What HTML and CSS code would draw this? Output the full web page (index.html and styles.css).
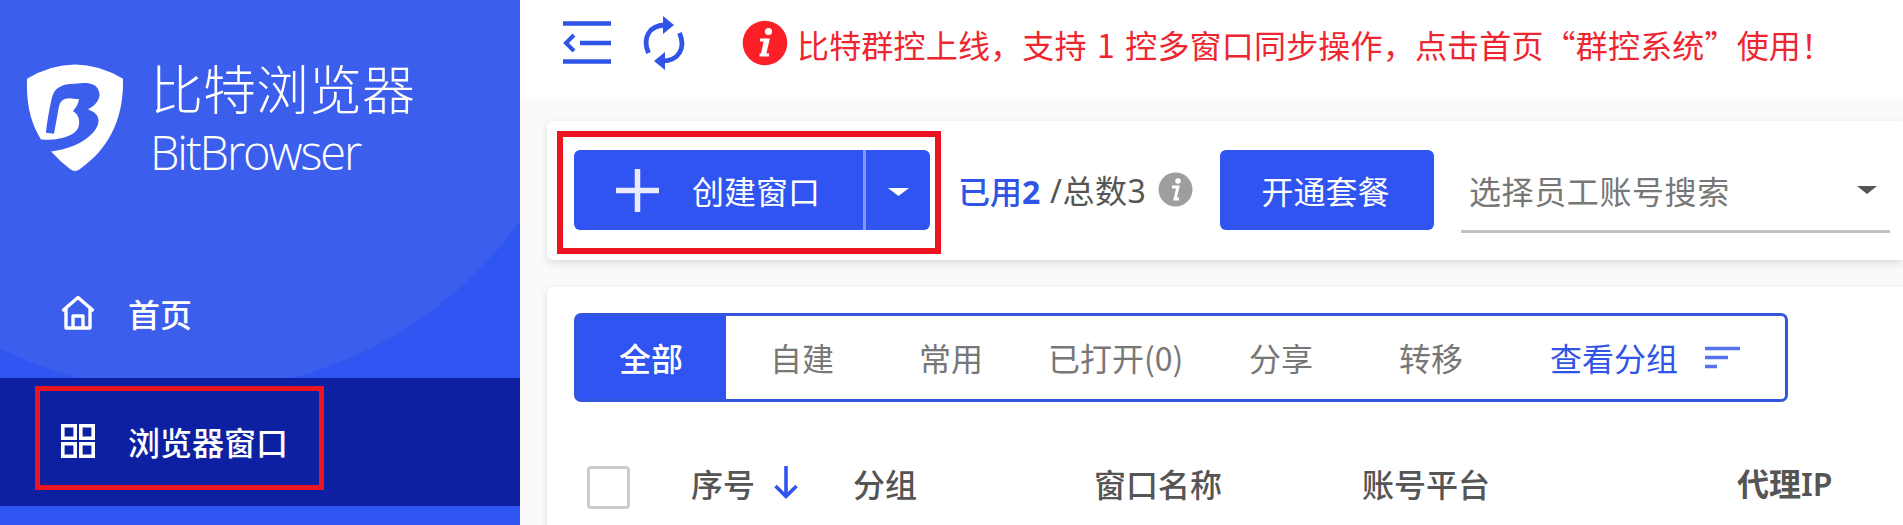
FILE: index.html
```html
<!DOCTYPE html>
<html lang="zh-CN">
<head>
<meta charset="utf-8">
<title>比特浏览器</title>
<link rel="stylesheet" href="styles.css">
</head>
<body>
<div class="app">
  <aside class="sidebar">
    <div class="brand">
      <svg class="brand-logo" width="98" height="108" viewBox="0 0 98 110" preserveAspectRatio="none">
        <path fill="#fff" d="M1 15Q49-14 97 15C98 57 82 87 54 107Q49 111 44 107Q34 99 25 89C41 87 57 81 67 70C75 61 74 52 66 48L62 46C71 42 75 34 73 28C71 20 63 18 49 20C38 20 30 23 27 31C25 36 21 59 20 70L28 71L33 43Q35 35 43 35L53 36C52 43 49 45 47 48C51 50 54 55 53 61C53 71 38 78 15 77C6 62 0 44 1 15Z"/>
      </svg>
      <div class="brand-text">
        <div class="brand-cn">比特浏览器</div>
        <div class="brand-en">BitBrowser</div>
      </div>
    </div>
    <nav class="menu">
      <a class="menu-item">
        <svg class="menu-icon" width="34" height="36" viewBox="0 0 34 36" fill="none" stroke="#fff" stroke-width="3.4" stroke-linejoin="round" stroke-linecap="round"><path d="M2.500 15 17 2.500 31.500 15M5 14V33H29V14M12 33V21H22V33"/></svg>
        <span>首页</span>
      </a>
      <a class="menu-item active">
        <svg class="menu-icon" width="34" height="36" viewBox="0 0 34 36" fill="none" stroke="#fff" stroke-width="3.6"><path d="M1.800 2.800H14.200V15.200H1.800ZM19.800 2.800H32.200V15.200H19.800ZM1.800 20.800H14.200V33.200H1.800ZM19.800 20.800H32.200V33.200H19.800Z"/></svg>
        <span>浏览器窗口</span>
        <i class="mark mark-menu"></i>
      </a>
    </nav>
  </aside>

  <main class="main">
    <header class="topbar">
      <svg class="fold" width="48" height="43" viewBox="0 0 48 43" fill="none" stroke="#3054e8"><path stroke-width="4.500" d="M0 2.500H48M17 22H48M0 40.500H48"/><path stroke-width="4" d="M11 14 3 22 11 30"/></svg>
      <svg class="refresh" width="42" height="54" viewBox="0 0 42 54"><g fill="none" stroke="#3054e8" stroke-width="4.800"><path d="M5.500 37C-1 22 6 9 23 9"/><path d="M36.500 17C43 32 36 45 19 45"/></g><path fill="#3054e8" d="M20 0 31 9 20 18ZM22 36 11 45 22 54Z"/></svg>
      <svg class="notice-icon" width="46" height="46" viewBox="0 0 46 46"><circle cx="23" cy="23" r="22.300" fill="#fb2028"/><circle cx="26.500" cy="11.500" r="3.600" fill="#fff"/><path d="M18 20H26L22.500 35H27M17.500 35H22.500" fill="none" stroke="#fff" stroke-width="3"/><path d="M24.500 19 21 35" stroke="#fff" stroke-width="4.500"/></svg>
      <span class="notice">比特群控上线，支持 1 控多窗口同步操作，点击首页“群控系统”使用！</span>
    </header>

    <section class="card toolbar">
      <div class="split-btn">
        <div class="create">
          <svg width="43" height="43" viewBox="0 0 43 43" stroke="#e9ecff" stroke-width="5.500"><path d="M0 21.500H43M21.500 0V43"/></svg>
          <span>创建窗口</span>
        </div>
        <div class="create-more"><svg width="21" height="8" viewBox="0 0 21 8"><path fill="#fff" d="M0 0H21L10.500 8Z"/></svg></div>
        <i class="mark mark-create"></i>
      </div>
      <span class="used">已用<b>2</b></span>
      <span class="total">/总数3</span>
      <svg class="hint" width="35" height="35" viewBox="0 0 35 35"><circle cx="17.500" cy="17.500" r="17" fill="#9e9e9e"/><circle cx="20" cy="9" r="2.800" fill="#fff"/><path d="M14 15H20L17 27H21" fill="none" stroke="#fff" stroke-width="3"/></svg>
      <div class="plan">开通套餐</div>
      <div class="select"><span>选择员工账号搜索</span><svg width="20" height="8" viewBox="0 0 20 8"><path fill="#555" d="M0 0H20L10 8Z"/></svg></div>
    </section>

    <section class="card list">
      <div class="tabs">
        <div class="tab current">全部</div>
        <div class="tab own">自建</div>
        <div class="tab often">常用</div>
        <div class="tab opened">已打开(0)</div>
        <div class="tab shared">分享</div>
        <div class="tab moved">转移</div>
        <div class="tab groups">查看分组
          <svg width="36" height="23" viewBox="0 0 36 23" stroke="#5672ee" stroke-width="3.600"><path d="M0 2.500H35M0 11.500H23M0 20.500H12"/></svg>
        </div>
      </div>
      <div class="thead">
        <span class="check"></span>
        <span class="th col-no">序号<svg width="24" height="34" viewBox="0 0 24 34" fill="none" stroke="#3054f0" stroke-width="3.600"><path d="M12 0V31M1.500 20 12 30.500 22.500 20"/></svg></span>
        <span class="th col-group">分组</span>
        <span class="th col-name">窗口名称</span>
        <span class="th col-platform">账号平台</span>
        <span class="th col-ip">代理IP</span>
      </div>
    </section>
  </main>
</div>
</body>
</html>
```

FILE: styles.css
```css
* { box-sizing: border-box; }
body {
  margin: 0;
  font-family: "Noto Sans CJK SC", sans-serif;
  font-size: 32px;
  line-height: 40px;
  color: #555;
  white-space: nowrap;
}
svg { display: block; flex: none; }
.app { display: flex; width: 1903px; height: 525px; overflow: hidden; }

.sidebar {
  flex: none;
  width: 520px;
  height: 525px;
  color: #fff;
  background: radial-gradient(circle at 185px -22px, #3c5eec 413px, #2f55f3 415px);
}
.brand { display: flex; height: 250px; padding: 64px 0 0 26px; gap: 26px; }
.brand-cn { font-size: 53px; line-height: 53px; font-weight: 300; margin-top: -3px; }
.brand-en {
  font-family: "Open Sans", "Noto Sans", sans-serif;
  font-size: 47px;
  font-weight: 300;
  line-height: 60px;
  margin-top: 8px;
  letter-spacing: -2.1px;
}
.menu-item {
  position: relative;
  display: flex;
  align-items: center;
  height: 128px;
  padding: 0 0 2px 61px;
  gap: 33px;
  font-weight: 500;
}
.active { background: #0d20a2; }
.mark { position: absolute; border: 5px solid #ed1422; }
.mark-menu { left: 35px; top: 8px; width: 289px; height: 104px; }

.main { flex: 1; min-width: 0; background: #fafafa; }
.topbar { display: flex; height: 99px; padding-left: 43px; background: #fff; }
.fold { margin-top: 21px; }
.refresh { margin: 16px 0 0 32px; }
.notice-icon { margin: 20px 0 0 57px; }
.notice { margin: 24px 0 0 9px; color: #ee2630; word-spacing: 3px; letter-spacing: .18px; }

.card {
  margin-left: 27px;
  background: #fff;
  border-radius: 6px 0 0 6px;
  box-shadow: 0 3px 8px rgba(0, 0, 0, .12);
}
.toolbar { display: flex; height: 139px; margin-top: 22px; padding: 29px 0 0 27px; }
.split-btn {
  position: relative;
  display: flex;
  width: 356px;
  height: 80px;
  border-radius: 6px;
  background: #3054f1;
  color: #fff;
}
.create {
  display: flex;
  align-items: center;
  width: 292px;
  gap: 33px;
  padding-left: 42px;
  border-right: 3px solid #7f97ff;
}
.create-more { flex: 1; display: flex; align-items: center; justify-content: center; padding-top: 3px; }
.mark-create { left: -17px; top: -19px; width: 384px; height: 123px; border-width: 6px; }
.used { width: 91px; margin: 20px 0 0 28px; color: #3054e8; font-weight: 500; }
.used b { font-family: "Noto Sans", sans-serif; }
.total { width: 100px; margin-top: 22px; padding-left: 1px; font-family: "Noto Sans", "Noto Sans CJK SC", sans-serif; line-height: 38px; letter-spacing: .5px; }
.hint { margin: 22px 0 0 9px; }
.plan {
  width: 214px;
  height: 80px;
  margin-left: 27px;
  padding-right: 3px;
  border-radius: 6px;
  background: #3054f1;
  color: #fff;
  text-align: center;
  line-height: 80px;
}
.select {
  display: flex;
  align-items: center;
  justify-content: space-between;
  width: 429px;
  height: 83px;
  margin-left: 27px;
  padding: 2px 13px 3px 8px;
  border-bottom: 3px solid #c2c2c2;
  color: #777;
  letter-spacing: .6px;
}

.list { height: 260px; margin-top: 27px; padding: 26px 0 0 27px; }
.tabs {
  display: flex;
  width: 1214px;
  height: 89px;
  border: 3px solid #3357dc;
  border-radius: 7px;
  color: #777;
  line-height: 83px;
}
.tab { height: 83px; }
.current { width: 149px; padding-left: 42px; background: #3054f1; color: #fff; font-weight: 500; }
.own { width: 148px; padding-left: 44px; }
.often { width: 148px; padding-left: 45px; }
.opened { width: 183px; padding-left: 26px; }
.shared { width: 150px; padding-left: 44px; }
.moved { width: 150px; padding-left: 44px; }
.groups { display: flex; align-items: center; padding-left: 45px; gap: 27px; color: #3054e8; }

.thead { display: flex; height: 80px; padding: 61px 0 0 13px; font-weight: 500; }
.check { flex: none; width: 43px; height: 43px; margin-top: 3px; border: 3px solid #ccc; border-radius: 4px; }
.th { flex: none; }
.col-no { display: flex; gap: 19px; width: 162px; margin-left: 61px; }
.col-no svg { margin-top: 3px; }
.col-group { width: 241px; }
.col-name { width: 268px; }
.col-platform { width: 375px; }
.col-ip { font-family: "Noto Sans", "Noto Sans CJK SC", sans-serif; font-weight: 600; line-height: 42px; }
```
